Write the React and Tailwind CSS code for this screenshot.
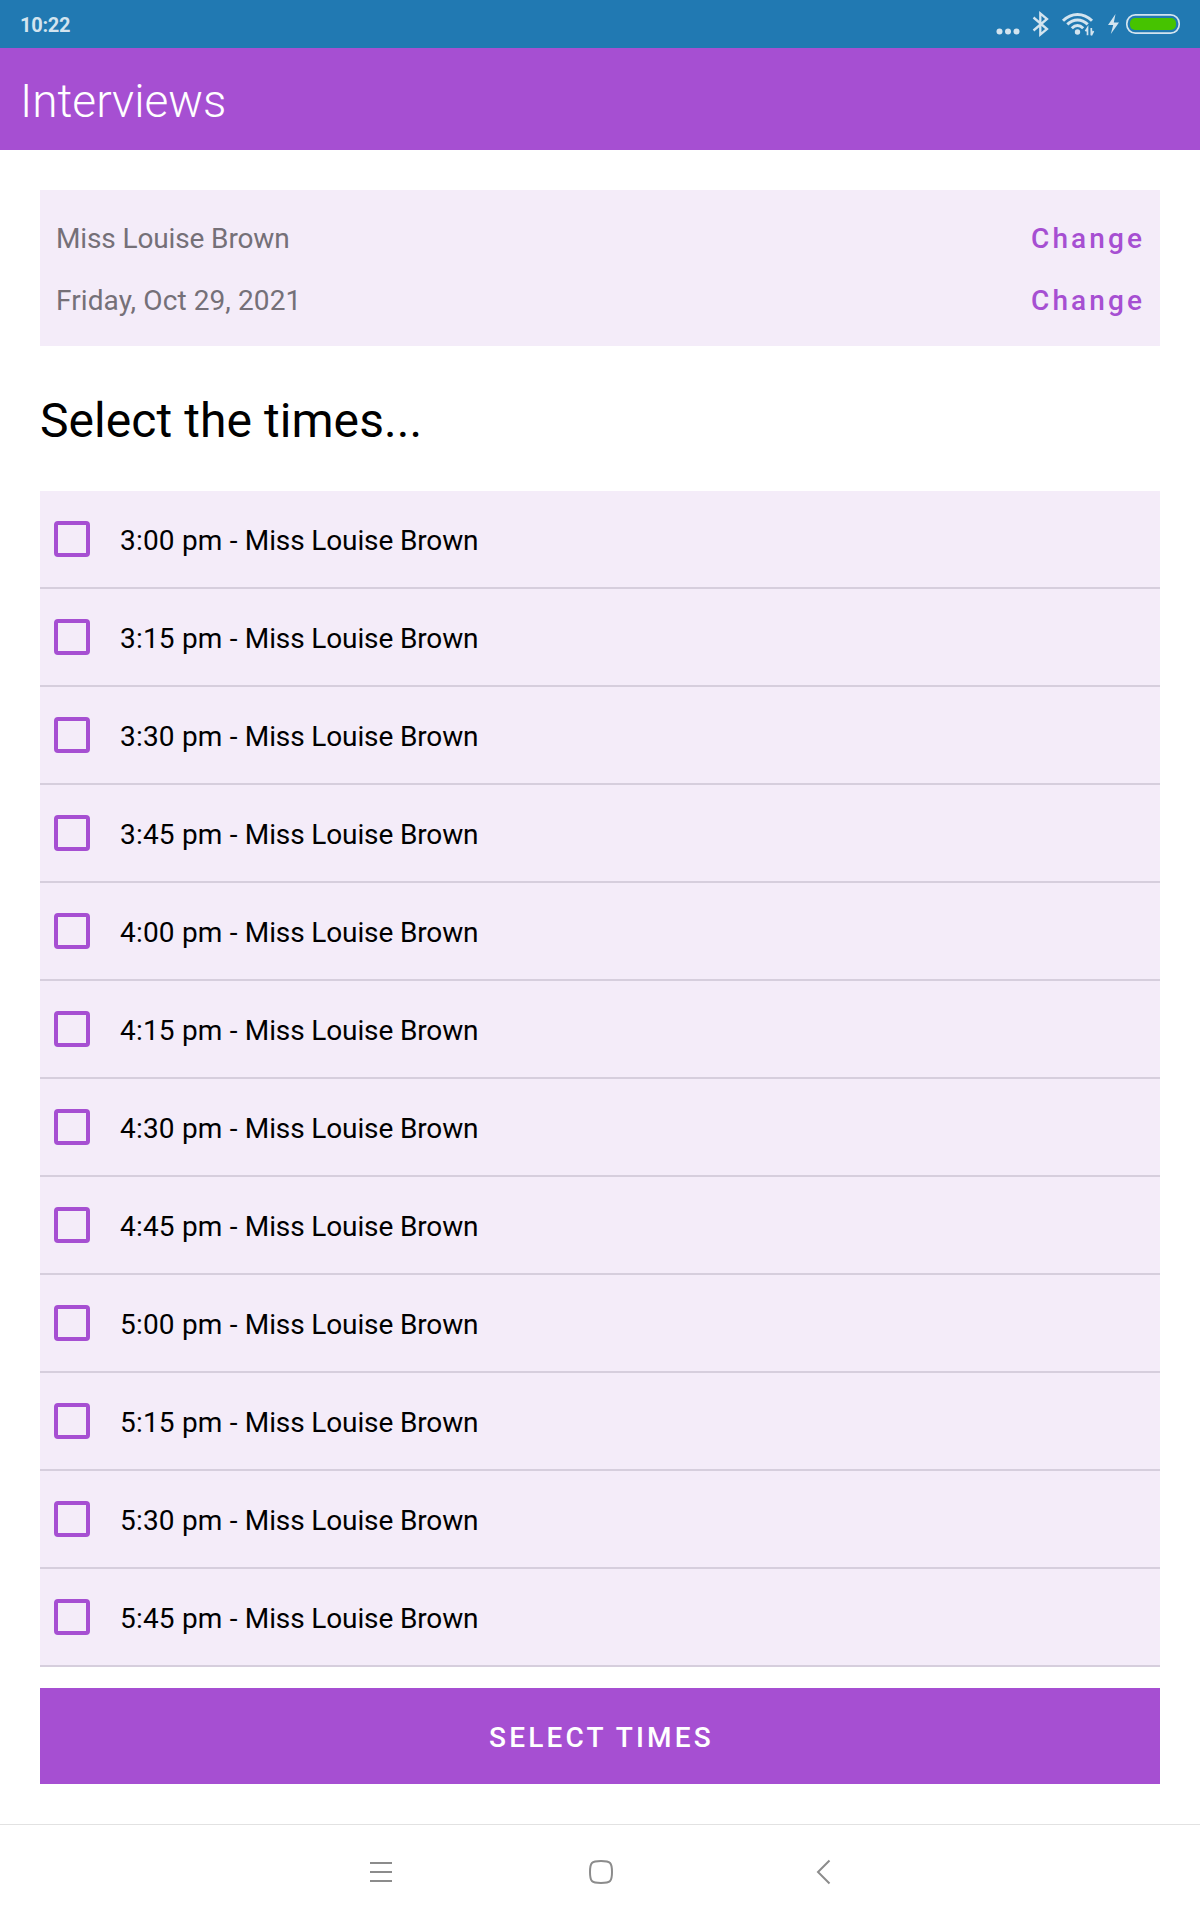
const times = [
  '3:00', '3:15', '3:30', '3:45', '4:00', '4:15',
  '4:30', '4:45', '5:00', '5:15', '5:30', '5:45',
];

function StatusIcons() {
  return (
    <svg width="220" height="48" viewBox="0 0 220 48" fill="none" stroke="#d3e4ef">
      <g fill="#d3e4ef" stroke="none">
        <circle cx="19.5" cy="31.5" r="3" />
        <circle cx="28" cy="31.5" r="3" />
        <circle cx="36.5" cy="31.5" r="3" />
        <circle cx="97.5" cy="32" r="2.7" />
        <path d="M135.500 14 128 25h5.200l-2.400 9L139 22.600h-5.200z" />
      </g>
      <path d="M53.500 17.500 67 29l-6.700 5.600V13.400L67 19 53.500 30.500" strokeWidth="2.300" />
      <path d="M83 20.800C91.500 12.300 103.500 12.300 112 20.800" strokeWidth="3" />
      <path d="M87.300 24.400C93.500 18.400 101.500 18.400 107.700 24.400" strokeWidth="3" />
      <path d="M91.800 28.200C95.500 24.500 99.500 24.500 103.200 28.200" strokeWidth="3" />
      <path d="M107.500 35.300V28l-2 3.200M111.300 28v7.300l2.200-4.300" strokeWidth="1.700" />
      <rect x="146.800" y="14.900" width="52.400" height="18.200" rx="8.500" strokeWidth="1.700" />
      <rect x="150" y="18" width="46" height="12" rx="5" fill="#46c300" stroke="none" />
    </svg>
  );
}

function SummaryRow({ children }) {
  return (
    <div className="flex h-[62px] items-center justify-between text-[#757078]">
      {children}
      <button className="-mr-px font-medium tracking-[3.1px] text-[#a64fd2]">Change</button>
    </div>
  );
}

export default function App() {
  return (
    <div className="flex h-[1920px] w-[1200px] flex-col bg-white font-['Roboto',sans-serif] text-[28px] leading-[34px] text-black">
      <div className="flex h-12 shrink-0 items-center justify-between bg-[#2179b2] pl-5">
        <span className="pt-0.5 text-xl font-bold leading-6 tracking-[-0.25px] text-[#d3e4ef]">10:22</span>
        <StatusIcons />
      </div>
      <header className="flex h-[102px] shrink-0 items-center bg-[#a64fd2] pl-5 pt-1">
        <h1 className="text-[46px] font-light leading-[56px] text-white">Interviews</h1>
      </header>
      <main className="flex grow flex-col px-10 pt-10">
        <section className="h-[156px] bg-[#f4ecf9] px-4 pt-[18px]">
          <SummaryRow>
            <span className="tracking-[-0.13px]">Miss Louise Brown</span>
          </SummaryRow>
          <SummaryRow>
            <span className="tracking-[0.1px]">Friday, Oct 29, 2021</span>
          </SummaryRow>
        </section>
        <h2 className="flex h-[145px] items-center pt-1 text-[48px] leading-[56px] tracking-[0.06px]">Select the times...</h2>
        <ul className="bg-[#f4ecf9]">
          {times.map((t) => (
            <li key={t} className="flex h-[98px] items-center gap-[30px] border-b-2 border-[#d6cedd] pl-3.5">
              <span className="size-9 rounded border-4 border-[#a64fd2]" />
              <span className="pt-1 tracking-[-0.13px]">
                <span className="tracking-[0.2px]">{t} pm - </span>Miss Louise Brown
              </span>
            </li>
          ))}
        </ul>
        <button className="mt-[21px] h-24 bg-[#a64fd2] pl-[3px] pt-1 font-medium tracking-[3.2px] text-white">SELECT TIMES</button>
      </main>
      <nav className="flex h-24 shrink-0 justify-center border-t border-[#e2e2e2] bg-white">
        <svg width="520" height="95" viewBox="0 0 520 95" fill="none" stroke="#8c8c8c" strokeWidth="2">
          <path d="M30 38h22M30 47h22M30 56h22" />
          <path d="M261 36C270.500 36 272 37.500 272 47S270.500 58 261 58 250 56.500 250 47 251.500 36 261 36Z" />
          <path d="M489.500 35.500 478 47 489.500 58.500" />
        </svg>
      </nav>
    </div>
  );
}
